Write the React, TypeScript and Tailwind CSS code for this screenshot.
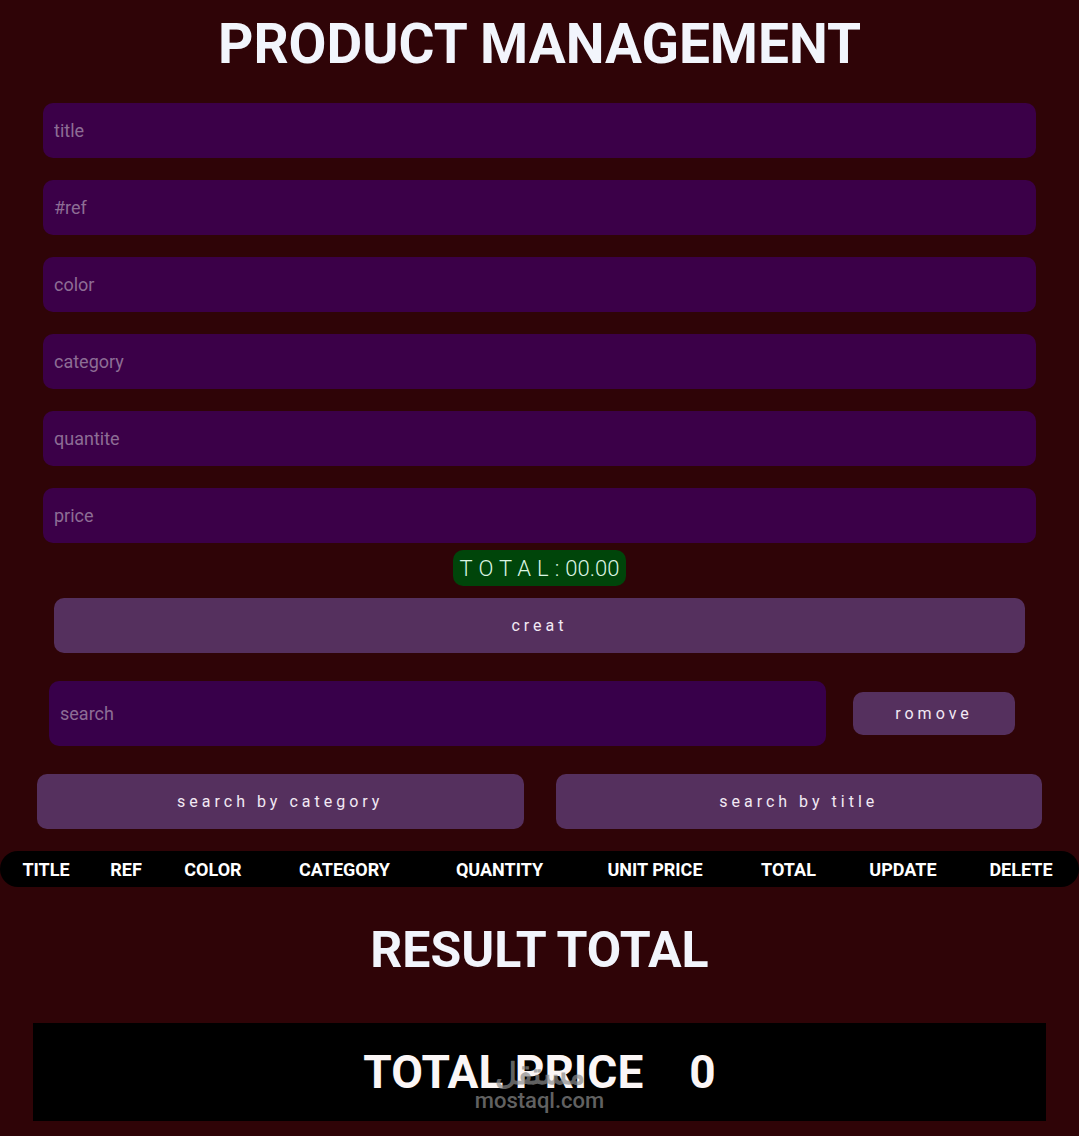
import React from "react";

const fields = ["title", "#ref", "color", "category", "quantite", "price"];

const columns = [
  { label: "TITLE", w: "w-[92px]" },
  { label: "REF", w: "w-[68px]" },
  { label: "COLOR", w: "w-[106px]" },
  { label: "CATEGORY", w: "w-[157px]" },
  { label: "QUANTITY", w: "w-[153px]" },
  { label: "UNIT PRICE", w: "w-[158px]" },
  { label: "TOTAL", w: "w-[109px]" },
  { label: "UPDATE", w: "w-[120px]" },
  { label: "DELETE", w: "w-[116px]" },
];

const App = () => {
  return (
    <div className="min-h-[1136px] bg-[#2f0407] pt-px font-['Roboto',sans-serif] text-white">
      {/* Header */}
      <h1 className="pt-[13px] text-center text-[55px] font-bold leading-[60px] text-[#f2f5fc]">
        PRODUCT MANAGEMENT
      </h1>

      {/* Inputs */}
      <div className="mt-[29px] flex flex-col gap-[22px] px-[43px]">
        {fields.map((f) => (
          <input
            key={f}
            placeholder={f}
            className="h-[55px] w-full rounded-[10px] bg-[#3b0048] px-[11px] text-[18px] text-white outline-none placeholder:text-[#8d6d95]"
          />
        ))}
      </div>

      {/* Total badge */}
      <div className="mt-[7px] flex justify-center">
        <div className="flex h-[36px] items-center rounded-[10px] bg-[#00450a] px-[7px] text-[22px] font-light text-[#dcf5e4]">
          <span className="tracking-[6px]">TOTAL:</span>
          <span>00.00</span>
        </div>
      </div>

      <div className="mt-[12px] px-[54px]">
        <button className="h-[55px] w-full rounded-[10px] bg-[#55305e] text-[16px] tracking-[4px] text-[#f2e9f4]">
          creat
        </button>
      </div>

      {/* Search */}
      <div className="mt-[28px] flex items-center pl-[49px] pr-[64px]">
        <input
          placeholder="search"
          className="h-[65px] w-[777px] rounded-[10px] bg-[#38004a] px-[11px] text-[18px] text-white outline-none placeholder:text-[#8d6d95]"
        />
        <button className="ml-auto h-[43px] w-[162px] rounded-[10px] bg-[#55305e] text-[16px] tracking-[4px] text-[#f2e9f4]">
          romove
        </button>
      </div>

      <div className="mt-[28px] flex gap-[32px] px-[37px]">
        <button className="h-[55px] flex-1 rounded-[10px] bg-[#55305e] text-[16px] tracking-[4px] text-[#f2e9f4]">
          search by category
        </button>
        <button className="h-[55px] flex-1 rounded-[10px] bg-[#55305e] text-[16px] tracking-[4px] text-[#f2e9f4]">
          search by title
        </button>
      </div>

      {/* Table header */}
      <div className="mt-[22px] flex h-[36px] items-center rounded-[18px] bg-black">
        {columns.map((c) => (
          <div key={c.label} className={`${c.w} text-center text-[18px] font-bold`}>
            {c.label}
          </div>
        ))}
      </div>

      {/* Result */}
      <h2 className="mt-[35px] text-center text-[50px] font-bold leading-[56px] text-[#f2f5fc]">
        RESULT TOTAL
      </h2>

      <div className="relative mx-[33px] mt-[45px] flex h-[98px] items-center justify-center bg-black">
        <span className="text-[46px] font-bold leading-none text-[#fbf6f6]">TOTAL PRICE</span>
        <span className="ml-[46px] text-[46px] font-bold leading-none text-[#fbf6f6]">0</span>
        {/* watermark */}
        <div className="pointer-events-none absolute left-1/2 top-[34px] flex -translate-x-1/2 flex-col items-center text-[#8a8a8a] opacity-70">
          <span className="font-['Noto_Sans',sans-serif] text-[30px] font-bold leading-[32px]">مستقل</span>
          <span className="font-['Roboto',sans-serif] text-[22px] font-medium leading-[24px]">mostaql.com</span>
        </div>
      </div>
    </div>
  );
};

export default App;
